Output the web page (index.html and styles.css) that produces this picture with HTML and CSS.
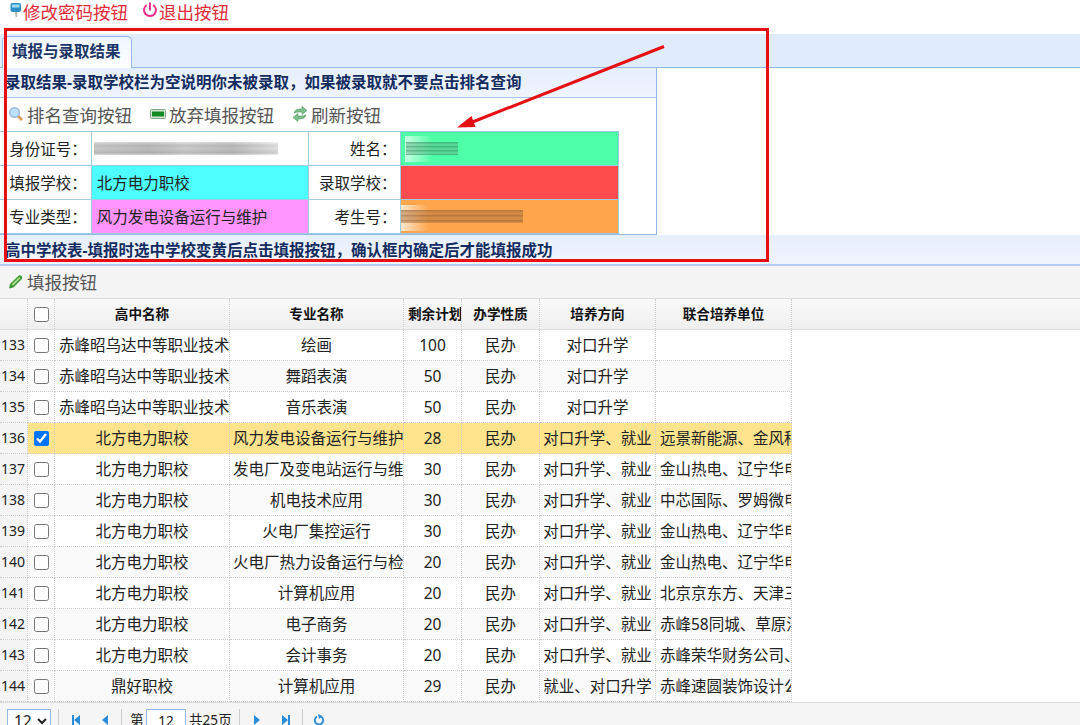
FILE: index.html
```
<!DOCTYPE html>
<html lang="zh-CN">
<head>
  <meta charset="UTF-8">
  <title>填报与录取结果</title>
  <link rel="stylesheet" href="styles.css">
</head>
<body>
  <div class="page">
    <div class="topbar">
      <a class="top-link">
        <svg class="icon-key" width="12" height="18" viewBox="0 0 12 18"><path d="M4.500 9h3l-.6 6h-1.200z" fill="#b8b6b0"/><rect x=".5" y="1" width="10.500" height="9" rx="2" fill="#2d8fc4"/><rect x="2" y="2.500" width="7.500" height="3" fill="#9edcf5"/></svg>修改密码按钮</a>
      <a class="top-link exit">
        <svg width="16" height="18" viewBox="0 0 16 18"><path d="M4.800 3A6 6 0 1 0 11.200 3M8 .5V8.500" fill="none" stroke="#f0308c" stroke-width="2"/></svg>退出按钮</a>
    </div>

    <div class="tabs"><div class="tab">填报与录取结果</div></div>

    <div class="result-panel">
      <div class="panel-title">录取结果-录取学校栏为空说明你未被录取，如果被录取就不要点击排名查询</div>
      <div class="toolbar">
        <a class="btn"><svg width="16" height="16" viewBox="0 0 16 16"><path d="M9.500 9.500l4.500 4.500" stroke="#d99a5b" stroke-width="3"/><circle cx="6.500" cy="6.500" r="4.800" fill="#bfe0fa" stroke="#9ebbe0" stroke-width="1.500"/></svg>排名查询按钮</a>
        <a class="btn"><svg width="16" height="16" viewBox="0 0 16 16"><rect x=".5" y="3.500" width="15" height="9" rx="1" fill="#d3e4d4" stroke="#86a58a"/><rect x="2" y="5.500" width="12" height="5" fill="#128a22"/></svg>放弃填报按钮</a>
        <a class="btn"><svg width="16" height="16" viewBox="0 0 16 16"><path d="M2 7q1-4 6-4h2V.5L15 4.500l-5 4V6H7Q4 6 2 7zM14 9q-1 4-6 4H6v2.500l-5-4 5-4V10h3q3 0 5-1z" fill="#7dbf8a" stroke="#4d9960" stroke-width=".6"/></svg>刷新按钮</a>
      </div>
      <table class="info">
        <tr>
          <th>身份证号：</th><td><span class="smudge smudge-id"></span></td>
          <th>姓名：</th><td class="green"><span class="smudge smudge-name"></span></td>
        </tr>
        <tr>
          <th>填报学校：</th><td class="cyan">北方电力职校</td>
          <th>录取学校：</th><td class="red"></td>
        </tr>
        <tr>
          <th>专业类型：</th><td class="pink">风力发电设备运行与维护</td>
          <th>考生号：</th><td class="orange"><span class="smudge smudge-no"></span></td>
        </tr>
      </table>
    </div>

    <div class="panel-title school-title">高中学校表-填报时选中学校变黄后点击填报按钮，确认框内确定后才能填报成功</div>
    <div class="toolbar school-toolbar">
      <a class="btn"><svg width="16" height="16" viewBox="0 0 16 16"><path d="M1 14.500l1-4.500L10.500 1.700q1.500-1.200 3 .2t.3 3.100L5.500 13.500z" fill="#3f9a35"/><path d="M4.300 11L11.800 3.700" stroke="#a5db8d" stroke-width="1.800"/></svg>填报按钮</a>
    </div>

    <div class="grid-head">
      <table class="grid">
        <colgroup><col class="c-no"><col class="c-ck"><col class="c-school"><col class="c-major"><col class="c-plan"><col class="c-type"><col class="c-way"><col class="c-unit"></colgroup>
        <tr><th></th><th><input type="checkbox"></th><th>高中名称</th><th>专业名称</th><th class="th-plan">剩余计划</th><th>办学性质</th><th>培养方向</th><th>联合培养单位</th></tr>
      </table>
    </div>
    <table class="grid grid-body">
      <colgroup><col class="c-no"><col class="c-ck"><col class="c-school"><col class="c-major"><col class="c-plan"><col class="c-type"><col class="c-way"><col class="c-unit"></colgroup>
      <tr><td>133</td><td><input type="checkbox"></td><td>赤峰昭乌达中等职业技术</td><td>绘画</td><td>100</td><td>民办</td><td>对口升学</td><td></td></tr>
      <tr><td>134</td><td><input type="checkbox"></td><td>赤峰昭乌达中等职业技术</td><td>舞蹈表演</td><td>50</td><td>民办</td><td>对口升学</td><td></td></tr>
      <tr><td>135</td><td><input type="checkbox"></td><td>赤峰昭乌达中等职业技术</td><td>音乐表演</td><td>50</td><td>民办</td><td>对口升学</td><td></td></tr>
      <tr class="selected"><td>136</td><td><input type="checkbox" checked></td><td>北方电力职校</td><td>风力发电设备运行与维护</td><td>28</td><td>民办</td><td>对口升学、就业</td><td>远景新能源、金风科</td></tr>
      <tr><td>137</td><td><input type="checkbox"></td><td>北方电力职校</td><td>发电厂及变电站运行与维</td><td>30</td><td>民办</td><td>对口升学、就业</td><td>金山热电、辽宁华电</td></tr>
      <tr><td>138</td><td><input type="checkbox"></td><td>北方电力职校</td><td>机电技术应用</td><td>30</td><td>民办</td><td>对口升学、就业</td><td>中芯国际、罗姆微电</td></tr>
      <tr><td>139</td><td><input type="checkbox"></td><td>北方电力职校</td><td>火电厂集控运行</td><td>30</td><td>民办</td><td>对口升学、就业</td><td>金山热电、辽宁华电</td></tr>
      <tr><td>140</td><td><input type="checkbox"></td><td>北方电力职校</td><td>火电厂热力设备运行与检</td><td>20</td><td>民办</td><td>对口升学、就业</td><td>金山热电、辽宁华电</td></tr>
      <tr><td>141</td><td><input type="checkbox"></td><td>北方电力职校</td><td>计算机应用</td><td>20</td><td>民办</td><td>对口升学、就业</td><td>北京京东方、天津三</td></tr>
      <tr><td>142</td><td><input type="checkbox"></td><td>北方电力职校</td><td>电子商务</td><td>20</td><td>民办</td><td>对口升学、就业</td><td>赤峰58同城、草原汇</td></tr>
      <tr><td>143</td><td><input type="checkbox"></td><td>北方电力职校</td><td>会计事务</td><td>20</td><td>民办</td><td>对口升学、就业</td><td>赤峰荣华财务公司、</td></tr>
      <tr><td>144</td><td><input type="checkbox"></td><td>鼎好职校</td><td>计算机应用</td><td>29</td><td>民办</td><td>就业、对口升学</td><td>赤峰速圆装饰设计公</td></tr>
    </table>

    <div class="pager">
      <div class="page-size">12<svg width="10" height="7" viewBox="0 0 10 7"><path d="M1 1l4 4 4-4" fill="none" stroke="#222" stroke-width="2"/></svg></div>
      <i class="sep"></i>
      <svg class="pg first" width="10" height="12" viewBox="0 0 10 12"><path d="M1 1h2v10H1zM9 1v10L3 6z" fill="#2a8ddb"/></svg>
      <svg class="pg prev" width="10" height="12" viewBox="0 0 10 12"><path d="M8 1v10L2 6z" fill="#2a8ddb"/></svg>
      <i class="sep"></i>
      <span class="page-label">第</span><div class="page-no">12</div><span class="page-total">共25页</span>
      <i class="sep"></i>
      <svg class="pg next" width="10" height="12" viewBox="0 0 10 12"><path d="M2 1v10l6-5z" fill="#2a8ddb"/></svg>
      <svg class="pg last" width="10" height="12" viewBox="0 0 10 12"><path d="M7 1h2v10H7zM1 1v10l6-5z" fill="#2a8ddb"/></svg>
      <i class="sep"></i>
      <svg class="pg reload" width="12" height="12" viewBox="0 0 12 12"><path d="M4 2.500A4.200 4.200 0 1 0 8 2.500" fill="none" stroke="#2a8ddb" stroke-width="1.800"/><path d="M5 0l4.500 2L6 5z" fill="#2a8ddb"/></svg>
    </div>

    <!-- 红框和箭头 -->
    <svg class="marks" width="1080" height="725" viewBox="0 0 1080 725">
      <rect x="5.500" y="29.500" width="762" height="231" fill="none" stroke="#e60f14" stroke-width="3"/>
      <path d="M664 46.500L470 123" stroke="#e60f14" stroke-width="3"/>
      <path d="M457 127.500l14.500-11.500 4 11z" fill="#e60f14"/>
    </svg>
  </div>
</body>
</html>
```
FILE: styles.css
```
* {
    box-sizing: border-box;
}

body {
    margin: 0;
    background: #fff;
    color: #222;
    font-family: "Noto Sans", "Noto Sans CJK SC", sans-serif;
    font-size: 15.5px;
}

.page {
    position: relative;
    width: 1080px;
    height: 725px;
    overflow: hidden;
}

.topbar {
    display: flex;
    height: 34px;
    padding-left: 10px;
    line-height: 25px;
    font-size: 17.5px;
    color: #e02a38;
}

.top-link {
    display: flex;
    width: 132px;
    white-space: nowrap;
}

.top-link svg {
    margin-top: 2px;
    flex: none;
}

.exit {
    width: auto;
    gap: 1px;
}

.icon-key {
    margin-right: 1px;
}

.tabs {
    height: 34px;
    padding: 2px 0 0 2px;
    background: #e0ecfc;
    border-bottom: 1px solid #95b8e7;
}

.tab {
    width: 130px;
    height: 32px;
    padding-left: 9px;
    line-height: 29px;
    font-weight: bold;
    color: #1b3566;
    background: linear-gradient(#eff5ff, #fff);
    border: 1px solid #95b8e7;
    border-bottom: 0;
    border-radius: 5px 5px 0 0;
    white-space: nowrap;
}

.result-panel {
    width: 657px;
    height: 167px;
    border-right: 1px solid #95b8e7;
    border-bottom: 1px solid #95b8e7;
}

.panel-title {
    height: 30px;
    padding-left: 5px;
    line-height: 29px;
    font-weight: bold;
    color: #142c60;
    background: linear-gradient(#e6effd, #f0f4fd);
    border-bottom: 1px solid #a9c4ea;
    white-space: nowrap;
}

.toolbar {
    display: flex;
    gap: 18px;
    height: 33px;
    padding: 0 0 1px 8px;
    font-size: 17.5px;
    color: #555;
}

.btn {
    display: flex;
    align-items: center;
    gap: 3px;
    white-space: nowrap;
}

.info {
    width: 619px;
    table-layout: fixed;
    border-collapse: collapse;
}

.info th,
.info td {
    height: 34px;
    padding: 0 4px 1px 5px;
    border: 1px solid #9fcce0;
    border-left: 0;
    font-weight: normal;
    white-space: nowrap;
}

.info th {
    width: 92px;
    text-align: right;
    padding: 0 4px 1px 0;
}

.info th:first-child {
    width: 91px;
}

.info td {
    width: 217px;
}

.info .green { background: #4dffa6; }
.info .cyan { background: #4dffff; }
.info .red { background: #ff4d4d; }
.info .pink { background: #ff94ff; }
.info .orange { background: #ffa64d; }

/* 打码的个人信息 */
.smudge {
    display: block;
    height: 13px;
}

.smudge-id {
    width: 184px;
    margin-left: -3px;
    background: linear-gradient(#fff6, #9994 25%, #bbb4 50%, #9996 85%, #fff6), linear-gradient(90deg, #ccc, #bbb 30%, #d0d0d0 50%, #bbb 75%, #eee);
}

.smudge-name {
    width: 52px;
    background: repeating-linear-gradient(#3a8a6099 0 1px, #62b08880 2px 4px);
}

.smudge-no {
    width: 122px;
    margin-left: -5px;
    background: repeating-linear-gradient(#8a583099 0 1px, #a8703c80 2px 5px);
}

.info .green {
    background: linear-gradient(90deg, #c8ffe2, #4dffa6 28px) 4px 4px / 100% 26px no-repeat #4dffa6;
}

.info .orange {
    background: linear-gradient(90deg, #ffe6cc, #ffa64d 28px) 0 5px / 100% 26px no-repeat #ffa64d;
}

.school-title {
    height: 31px;
    line-height: 31px;
    border-bottom: 2px solid #b5cdef;
}

.school-toolbar {
    height: 32px;
    background: #f4f4f4;
}

.grid {
    width: 792px;
    table-layout: fixed;
    border-collapse: separate;
    border-spacing: 0;
}

.c-no { width: 28px; }
.c-ck { width: 27px; }
.c-school { width: 175px; }
.c-major { width: 174px; }
.c-plan { width: 58px; }
.c-type { width: 78px; }
.c-way { width: 116px; }
.c-unit { width: 136px; }

.grid-head {
    height: 32px;
    background: linear-gradient(#f9f9f9, #efefef);
    border-top: 1px solid #ddd;
    border-bottom: 1px solid #ddd;
}

.grid th,
.grid td {
    height: 31px;
    padding: 0;
    overflow: hidden;
    text-align: center;
    white-space: nowrap;
    line-height: 22px;
    border-right: 1px dotted #ccc;
    border-bottom: 1px dotted #ccc;
}

.grid th {
    height: 30px;
    border-bottom: 0;
    font-size: 13.6px;
    color: #111;
}

.grid .th-plan {
    padding-left: 4px;
}

.grid-body tr:nth-child(even) td {
    background: #fafafa;
}

.grid-body tr.selected td {
    background: #ffe48d;
}

.grid-body tr td:first-child,
.grid-body tr.selected td:first-child {
    background: #f4f4f4;
    font-size: 14px;
    text-align: left;
    padding-left: 1px;
}

.grid-body td:nth-child(3) {
    padding: 0 4px;
}

.grid-body td:nth-child(4) {
    padding: 0 3px;
}

.grid-body td:nth-child(8) {
    padding-left: 4px;
    text-align: left;
}

.grid input {
    display: block;
    width: 15px;
    height: 15px;
    margin: 0 auto;
}

.pager {
    display: flex;
    height: 40px;
    padding: 6px 0 0 7px;
    line-height: 22px;
    background: #f5f5f5;
    border-top: 1px solid #ddd;
}

.page-size {
    display: flex;
    align-items: center;
    gap: 5px;
    width: 44px;
    height: 24px;
    padding-left: 6px;
    background: #fff;
    border: 1px solid #95b8e7;
}

.sep {
    width: 1px;
    margin-left: 7px;
    background: #ccc;
}

.pg {
    flex: none;
    margin-top: 5px;
}

.first { margin-left: 12px; }
.prev { margin: 5px 4px 0 19px; }
.next { margin-left: 12px; }
.last { margin: 5px 4px 0 19px; }
.reload { margin-left: 10px; }

.page-label,
.page-total {
    font-size: 13.6px;
}

.page-label {
    width: 16px;
    margin-left: 8px;
}

.page-no {
    width: 40px;
    height: 24px;
    margin-right: 3px;
    font-size: 13.5px;
    text-align: center;
    background: #fff;
    border: 1px solid #95b8e7;
}

.marks {
    position: absolute;
    left: 0;
    top: 0;
}
```
